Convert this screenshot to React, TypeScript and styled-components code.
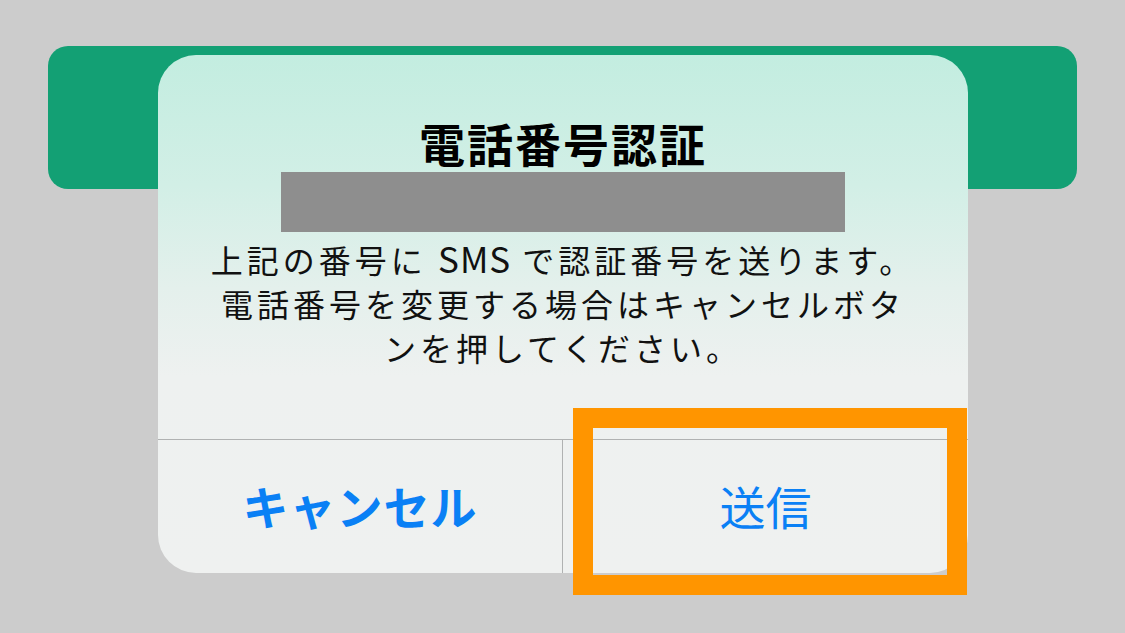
import React from "react";
import styled, { createGlobalStyle } from "styled-components";

const GlobalStyle = createGlobalStyle`
	html, body {
		margin: 0;
		padding: 0;
		background: #cccccc;
	}
	body {
		font-family: "Noto Sans CJK JP", "Noto Sans", sans-serif;
	}
`;

const Page = styled.div`
	position: relative;
	width: 1125px;
	height: 633px;
	box-sizing: border-box;
	padding: 46px 48px 0 48px;
	background: #cccccc;
	overflow: hidden;
`;

const HeaderBar = styled.div`
	height: 143px;
	border-radius: 20px;
	background: #13a074;
`;

const Dialog = styled.div`
	position: absolute;
	left: 158px;
	top: 55px;
	width: 810px;
	height: 518px;
	border-radius: 38px;
	overflow: hidden;
	display: flex;
	flex-direction: column;
	background: linear-gradient(
		180deg,
		#c3ede0 0%,
		#d2efe6 25%,
		#e4f0ec 45%,
		#eef1f0 62%,
		#eff1f0 100%
	);
`;

const Body = styled.div`
	flex: 1;
	display: flex;
	flex-direction: column;
	align-items: center;
	padding-top: 64px;
`;

const Title = styled.h1`
	margin: 0;
	font-size: 46px;
	line-height: 46px;
	font-weight: 700;
	letter-spacing: 2px;
	color: #000;
`;

const Redacted = styled.div`
	width: 564px;
	height: 60px;
	margin-top: 7px;
	background: #8e8e8e;
`;

const Message = styled.p`
	margin: 4px 0 0;
	font-size: 32px;
	line-height: 44px;
	letter-spacing: 4px;
	text-align: center;
	color: #111;
`;

const Latin = styled.span`
	font-size: 35px;
	letter-spacing: 1px;
`;

const ButtonRow = styled.div`
	display: grid;
	grid-template-columns: 405px 1fr;
	height: 133px;
	border-top: 1px solid #b0b2b2;
`;

const ActionButton = styled.button<{ $bold?: boolean; $divider?: boolean }>`
	display: flex;
	align-items: center;
	justify-content: center;
	padding: 0 0 4px;
	border: none;
	border-right: ${(p) => (p.$divider ? "1px solid #b0b2b2" : "none")};
	background: transparent;
	font-family: "Noto Sans CJK JP", "Noto Sans", sans-serif;
	font-size: 46px;
	font-weight: ${(p) => (p.$bold ? 700 : 400)};
	letter-spacing: ${(p) => (p.$bold ? "1px" : "0")};
	color: #0a80f5;
`;

const Highlight = styled.div`
	position: absolute;
	left: 573px;
	top: 408px;
	width: 394px;
	height: 187px;
	box-sizing: border-box;
	border: 20px solid #ff9500;
	pointer-events: none;
`;

export default function App() {
	return (
		<Page>
			<GlobalStyle />
			<HeaderBar />
			<Dialog>
				<Body>
					<Title>電話番号認証</Title>
					<Redacted />
					<Message>
						上記の番号に <Latin>SMS</Latin> で認証番号を送ります。
						<br />
						電話番号を変更する場合はキャンセルボタ
						<br />
						ンを押してください。
					</Message>
				</Body>
				<ButtonRow>
					<ActionButton $bold $divider>
						キャンセル
					</ActionButton>
					<ActionButton>送信</ActionButton>
				</ButtonRow>
			</Dialog>
			<Highlight />
		</Page>
	);
}
